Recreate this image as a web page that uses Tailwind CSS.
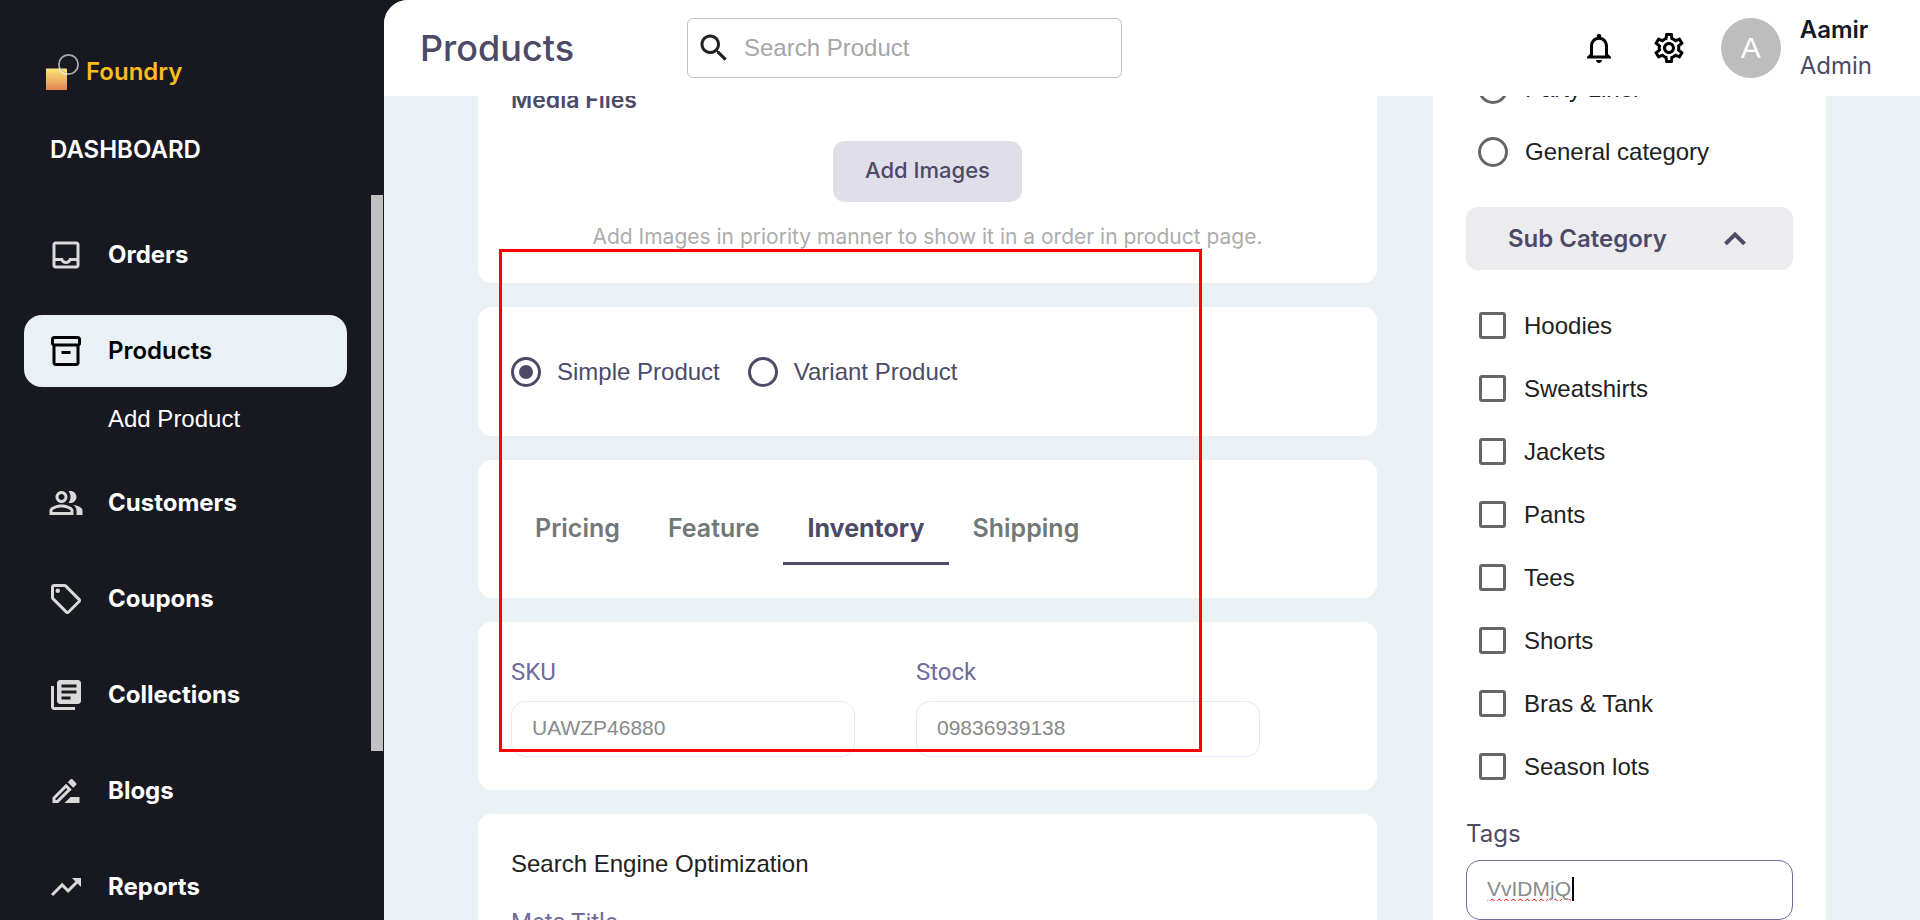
<!DOCTYPE html>
<html lang="en">
<head>
<meta charset="utf-8">
<meta name="viewport" content="width=device-width, initial-scale=1">
<title>Foundry – Products</title>
<script src="https://cdn.jsdelivr.net/npm/@tailwindcss/browser@4"></script>
</head>
<body class="bg-[#181821] font-['Liberation_Sans',Arial,sans-serif] text-2xl text-[#212121]">
<div class="relative flex h-screen overflow-hidden">

  <!-- Sidebar -->
  <aside class="relative w-1/5 shrink-0 text-white font-['Inter',sans-serif] font-semibold">
    <a href="#" class="ml-[46px] mt-[54px] flex h-9 items-center gap-[7px] text-[#fbbc1f]">
      <svg class="h-9 w-[33px]" viewBox="0 0 33 36" fill="none" aria-hidden="true">
        <defs><linearGradient id="logo" x1="0" y1="0" x2="0" y2="1"><stop offset="0" stop-color="#fbe77c"/><stop offset="1" stop-color="#e2854f"/></linearGradient></defs>
        <path d="M0 14.5h20a1 1 0 0 1 1 1V36H0z" fill="url(#logo)"/>
        <circle cx="22.500" cy="10.500" r="9.600" stroke="#a9a9ad" stroke-width="1.800"/>
        <path d="M12.900 14.500a10.500 10.500 0 0 0 8.100 5.700" stroke="#fff3c4" stroke-width="1.500"/>
      </svg>
      <span>Foundry</span>
    </a>
    <h2 class="ml-[50px] mt-[42px] leading-9">DASHBOARD</h2>
    <nav class="ml-6 mr-[37px] mt-[51px] font-bold" aria-label="Main">
      <ul class="flex flex-col gap-6">
        <li><a href="#" class="flex h-[72px] items-center gap-6 rounded-[18px] px-6">
          <svg class="size-9 text-[#d9d9da]" viewBox="0 0 24 24" fill="currentColor" aria-hidden="true"><path d="M19 3H5c-1.100 0-2 .9-2 2v14c0 1.100.9 2 2 2h14c1.100 0 2-.9 2-2V5c0-1.100-.9-2-2-2zm0 16H5v-3h3.560c.69 1.190 1.970 2 3.450 2s2.750-.81 3.450-2H19v3zm0-5h-4.990c0 1.100-.9 2-2 2s-2-.9-2-2H5V5h14v9z"/></svg>
          <span>Orders</span></a></li>
        <li>
          <a href="#" aria-current="page" class="flex h-[72px] items-center gap-6 rounded-[18px] bg-[#e9f1f5] px-6 font-semibold text-black">
            <svg class="size-9" viewBox="0 0 24 24" fill="currentColor" aria-hidden="true"><path d="M20 2H4c-1 0-2 .9-2 2v3.010c0 .72.43 1.340 1 1.690V20c0 1.100 1.100 2 2 2h14c.9 0 2-.9 2-2V8.700c.57-.35 1-.97 1-1.690V4c0-1.100-1-2-2-2zm-1 18H5V9h14v11zm1-13H4V4h16v3z"/><path d="M9 12h6v2H9z"/></svg>
            <span>Products</span></a>
          <a href="#" class="mt-2 flex h-12 items-center pl-[84px] font-['Liberation_Sans',Arial,sans-serif] font-normal">Add Product</a>
        </li>
        <li><a href="#" class="flex h-[72px] items-center gap-6 rounded-[18px] px-6">
          <svg class="size-9 text-[#d9d9da]" viewBox="0 0 24 24" fill="currentColor" aria-hidden="true"><path d="M16.670 13.130C18.040 14.060 19 15.320 19 17v3h4v-3c0-2.180-3.570-3.470-6.330-3.870zM15 12c2.210 0 4-1.790 4-4s-1.790-4-4-4c-.47 0-.91.1-1.330.24C14.500 5.270 15 6.580 15 8s-.5 2.730-1.330 3.760c.42.14.86.24 1.330.24zM9 12c2.210 0 4-1.790 4-4s-1.790-4-4-4-4 1.790-4 4 1.790 4 4 4zm0-6c1.100 0 2 .9 2 2s-.9 2-2 2-2-.9-2-2 .9-2 2-2zM9 13c-2.670 0-8 1.340-8 4v3h16v-3c0-2.660-5.330-4-8-4zm6 5H3v-.99C3.200 16.290 6.300 15 9 15s5.800 1.290 6 2v1z"/></svg>
          <span>Customers</span></a></li>
        <li><a href="#" class="flex h-[72px] items-center gap-6 rounded-[18px] px-6">
          <svg class="size-9 text-[#d9d9da]" viewBox="0 0 24 24" fill="currentColor" aria-hidden="true"><path d="M21.410 11.580l-9-9C12.050 2.220 11.550 2 11 2H4c-1.100 0-2 .9-2 2v7c0 .55.22 1.050.59 1.420l9 9c.36.36.86.58 1.410.58s1.050-.22 1.410-.59l7-7c.37-.36.59-.86.59-1.410s-.23-1.060-.59-1.420zM13 20.010L4 11V4h7v-.01l9 9-7 7.020z"/><circle cx="6.500" cy="6.500" r="1.500"/></svg>
          <span>Coupons</span></a></li>
        <li><a href="#" class="flex h-[72px] items-center gap-6 rounded-[18px] px-6">
          <svg class="size-9 text-[#d9d9da]" viewBox="0 0 24 24" fill="currentColor" aria-hidden="true"><path d="M4 6H2v14c0 1.100.9 2 2 2h14v-2H4V6zm16-4H8c-1.100 0-2 .9-2 2v12c0 1.100.9 2 2 2h12c1.100 0 2-.9 2-2V4c0-1.100-.9-2-2-2zm-1 9H9V9h10v2zm-4 4H9v-2h6v2zm4-8H9V5h10v2z"/></svg>
          <span>Collections</span></a></li>
        <li><a href="#" class="flex h-[72px] items-center gap-6 rounded-[18px] px-6">
          <svg class="size-9 text-[#d9d9da]" viewBox="0 0 24 24" fill="currentColor" aria-hidden="true"><path d="M15 16l-4 4h10v-4h-6zM12.060 7.190L3 16.250V20h3.750l9.060-9.060-3.750-3.750zM5.920 18H5v-.92l7.060-7.060.92.92L5.920 18zM18.710 8.040c.39-.39.39-1.020 0-1.410l-2.340-2.340c-.2-.2-.45-.29-.71-.29-.25 0-.51.1-.7.290l-1.830 1.830 3.750 3.750 1.830-1.830z"/></svg>
          <span>Blogs</span></a></li>
        <li><a href="#" class="flex h-[72px] items-center gap-6 rounded-[18px] px-6">
          <svg class="size-9 text-[#d9d9da]" viewBox="0 0 24 24" fill="currentColor" aria-hidden="true"><path d="M16 6l2.290 2.290-4.880 4.880-4-4L2 16.590 3.410 18l6-6 4 4 6.300-6.290L22 12V6z"/></svg>
          <span>Reports</span></a></li>
      </ul>
    </nav>
    <!-- Scrollbar thumb -->
    <div class="absolute right-px top-[195px] h-[556px] w-3 bg-[#c1c1c1]"></div>
  </aside>

  <div class="flex min-w-0 flex-1 flex-col overflow-hidden rounded-tl-[24px] bg-[#e9f1f5]">
    <!-- Top bar -->
    <header class="relative z-10 flex h-24 shrink-0 items-center bg-white pl-9 pr-12 font-['Inter',sans-serif]">
      <h1 class="w-[267px] text-4xl font-medium text-[#4d4a68]">Products</h1>
      <label class="flex h-[60px] w-[435px] items-center gap-3 rounded-md border border-[#c4c4c4] px-2 font-['Liberation_Sans',Arial,sans-serif]">
        <svg class="size-9 shrink-0" viewBox="0 0 24 24" fill="currentColor" aria-hidden="true"><path d="M15.500 14h-.79l-.28-.27C15.410 12.590 16 11.110 16 9.500 16 5.910 13.090 3 9.500 3S3 5.910 3 9.500 5.910 16 9.500 16c1.610 0 3.090-.59 4.230-1.570l.27.28v.79l5 4.990L20.490 19l-4.990-5zm-6 0C7.010 14 5 11.990 5 9.500S7.010 5 9.500 5 14 7.010 14 9.500 11.990 14 9.500 14z"/></svg>
        <input type="text" aria-label="Search Product" placeholder="Search Product" class="w-full min-w-0 outline-none placeholder:text-[#a6a6a6]">
      </label>
      <div class="ml-auto flex items-center text-black">
        <button type="button" aria-label="Notifications" class="mr-[34px]">
          <svg class="size-9" viewBox="0 0 24 24" fill="currentColor" aria-hidden="true"><path d="M12 22c1.100 0 2-.9 2-2h-4c0 1.100.9 2 2 2zm6-6v-5c0-3.070-1.630-5.640-4.500-6.320V4c0-.83-.67-1.500-1.500-1.500s-1.500.67-1.500 1.500v.68C7.640 5.360 6 7.920 6 11v5l-2 2v1h16v-1l-2-2zm-2 1H8v-6c0-2.480 1.510-4.500 4-4.500s4 2.020 4 4.500v6z"/></svg>
        </button>
        <button type="button" aria-label="Settings" class="mr-[34px]">
          <svg class="size-9" viewBox="0 0 24 24" fill="currentColor" aria-hidden="true"><path d="M19.430 12.980c.04-.32.07-.64.07-.98 0-.34-.03-.66-.07-.98l2.110-1.650c.19-.15.24-.42.12-.64l-2-3.460c-.09-.16-.26-.25-.44-.25-.06 0-.12.01-.17.030l-2.490 1c-.52-.4-1.080-.73-1.690-.98l-.38-2.650C14.460 2.180 14.250 2 14 2h-4c-.25 0-.46.18-.49.42l-.38 2.650c-.61.25-1.170.59-1.690.98l-2.490-1c-.06-.02-.12-.03-.18-.03-.17 0-.34.09-.43.25l-2 3.460c-.13.22-.07.49.12.64l2.110 1.650c-.04.32-.07.65-.07.98 0 .33.03.66.07.98l-2.110 1.650c-.19.15-.24.42-.12.64l2 3.460c.09.16.26.25.44.25.06 0 .12-.01.17-.03l2.490-1c.52.4 1.080.73 1.690.98l.38 2.650c.03.24.24.42.49.42h4c.25 0 .46-.18.49-.42l.38-2.650c.61-.25 1.170-.59 1.690-.98l2.490 1c.06.02.12.03.18.03.17 0 .34-.09.43-.25l2-3.460c.12-.22.07-.49-.12-.64l-2.110-1.650zm-1.980-1.710c.04.31.05.52.05.73 0 .21-.02.43-.05.73l-.14 1.130.89.7 1.080.84-.7 1.210-1.270-.51-1.040-.42-.9.680c-.43.32-.84.56-1.250.73l-1.060.43-.16 1.130-.2 1.350h-1.400l-.19-1.350-.16-1.130-1.060-.43c-.43-.18-.83-.41-1.230-.71l-.91-.7-1.060.43-1.270.51-.7-1.210 1.080-.84.89-.7-.14-1.130c-.03-.31-.05-.54-.05-.74s.02-.43.05-.73l.14-1.130-.89-.7-1.080-.84.7-1.210 1.270.51 1.040.42.9-.68c.43-.32.84-.56 1.250-.73l1.060-.43.16-1.130.2-1.350h1.390l.19 1.350.16 1.130 1.060.43c.43.18.83.41 1.230.71l.91.7 1.060-.43 1.270-.51.7 1.210-1.070.85-.89.7.14 1.130zM12 8c-2.210 0-4 1.790-4 4s1.790 4 4 4 4-1.790 4-4-1.790-4-4-4zm0 6c-1.100 0-2-.9-2-2s.9-2 2-2 2 .9 2 2-.9 2-2 2z"/></svg>
        </button>
        <div class="mr-[19px] flex size-[60px] items-center justify-center rounded-full bg-[#bdbdbd] text-[30px] text-white font-['Liberation_Sans',Arial,sans-serif]">A</div>
        <div class="leading-9"><p class="font-semibold text-[#111827]">Aamir</p><p class="text-[#4d4a68]">Admin</p></div>
      </div>
    </header>

    <main class="-mt-6 flex flex-1 items-start gap-14 px-[94px]">
      <div class="flex min-w-0 flex-1 flex-col gap-6">
        <section class="rounded-b-[14px] bg-white px-[33px] pb-7 pt-[10px] font-['Inter',sans-serif]">
          <h2 class="text-[23px] leading-9 font-semibold text-[#4d4a68]">Media Files</h2>
          <div class="mt-[23px] flex flex-col items-center">
            <button type="button" class="h-[61px] rounded-xl bg-[#e0dee8] px-8 pb-0.5 text-[22px] font-medium text-[#4d4a68]">Add Images</button>
            <p class="mt-[17px] text-[21px] leading-9 text-[#adadad]">Add Images in priority manner to show it in a order in product page.</p>
          </div>
        </section>

        <section class="flex h-[129px] items-center gap-7 rounded-[14px] bg-white px-[33px] text-[#4d4a68]">
          <label class="flex items-center gap-4"><input type="radio" name="kind" checked class="size-[30px] appearance-none rounded-full border-3 border-[#4d4a68] bg-white bg-clip-content p-[5px] checked:bg-[#4d4a68]">Simple Product</label>
          <label class="flex items-center gap-4"><input type="radio" name="kind" class="size-[30px] appearance-none rounded-full border-3 border-[#4d4a68] bg-white bg-clip-content p-[5px] checked:bg-[#4d4a68]">Variant Product</label>
        </section>

        <section class="rounded-[14px] bg-white px-[33px] py-[33px] font-['Inter',sans-serif]">
          <div role="tablist" class="flex h-[72px] text-[25px] font-semibold text-[#717877]">
            <button type="button" role="tab" aria-selected="false" class="px-6">Pricing</button>
            <button type="button" role="tab" aria-selected="false" class="px-6">Feature</button>
            <button type="button" role="tab" aria-selected="true" class="border-b-3 border-[#4d4a68] px-6 pt-[3px] font-bold text-[#4d4a68]">Inventory</button>
            <button type="button" role="tab" aria-selected="false" class="px-6">Shipping</button>
          </div>
        </section>

        <section class="grid grid-cols-2 rounded-[14px] bg-white pb-[33px] pl-[33px] pr-14 pt-8">
          <div class="flex flex-col gap-[11px] pr-[61px]">
            <label for="sku" class="font-['Roboto',sans-serif] leading-9 text-[#706b9c]">SKU</label>
            <input id="sku" type="text" value="UAWZP46880" class="h-14 rounded-[14px] border border-[#e8e6fb] px-5 pb-0.5 text-[21px] text-[#8a8a8a] outline-none">
          </div>
          <div class="flex flex-col gap-[11px] pr-[61px]">
            <label for="stock" class="font-['Roboto',sans-serif] leading-9 text-[#706b9c]">Stock</label>
            <input id="stock" type="text" value="09836939138" class="h-14 rounded-[14px] border border-[#e8e6fb] px-5 pb-0.5 text-[21px] text-[#8a8a8a] outline-none">
          </div>
        </section>

        <section class="rounded-t-[14px] bg-white px-[33px] pb-24 pt-8">
          <h2 class="leading-9">Search Engine Optimization</h2>
          <label for="meta" class="mt-[22px] block font-['Roboto',sans-serif] leading-9 text-[#706b9c]">Meta Title</label>
          <input id="meta" type="text" class="mt-3 h-14 w-full rounded-[14px] border border-[#e8e6fb] px-5 text-[21px]">
        </section>
      </div>

      <aside class="flex w-[393px] shrink-0 flex-col self-stretch bg-white px-[33px]">
        <div class="flex flex-col pl-3">
          <label class="-mt-[15px] flex h-[63px] items-center gap-[17px]"><input type="radio" name="cat" class="size-[30px] appearance-none rounded-full border-3 border-[#666]">Party Liner</label>
          <label class="flex h-[63px] items-center gap-[17px]"><input type="radio" name="cat" class="size-[30px] appearance-none rounded-full border-3 border-[#666]">General category</label>
        </div>
        <button type="button" aria-expanded="true" class="mt-6 flex h-[63px] shrink-0 items-center justify-between rounded-xl bg-[#ececee] pl-[42px] pr-10 font-['Inter',sans-serif] font-semibold text-[#4d4a68]">
          Sub Category
          <svg class="size-9" viewBox="0 0 24 24" fill="currentColor" aria-hidden="true"><path d="M12 7.200l-7.300 7.100 1.900 1.900L12 10.900l5.400 5.300 1.900-1.900z"/></svg>
        </button>
        <div class="mt-6 flex flex-col pl-[13px]">
          <label class="flex h-[63px] items-center gap-[18px]"><input type="checkbox" class="size-[27px] appearance-none rounded-[3px] border-3 border-[#666]">Hoodies</label>
          <label class="flex h-[63px] items-center gap-[18px]"><input type="checkbox" class="size-[27px] appearance-none rounded-[3px] border-3 border-[#666]">Sweatshirts</label>
          <label class="flex h-[63px] items-center gap-[18px]"><input type="checkbox" class="size-[27px] appearance-none rounded-[3px] border-3 border-[#666]">Jackets</label>
          <label class="flex h-[63px] items-center gap-[18px]"><input type="checkbox" class="size-[27px] appearance-none rounded-[3px] border-3 border-[#666]">Pants</label>
          <label class="flex h-[63px] items-center gap-[18px]"><input type="checkbox" class="size-[27px] appearance-none rounded-[3px] border-3 border-[#666]">Tees</label>
          <label class="flex h-[63px] items-center gap-[18px]"><input type="checkbox" class="size-[27px] appearance-none rounded-[3px] border-3 border-[#666]">Shorts</label>
          <label class="flex h-[63px] items-center gap-[18px]"><input type="checkbox" class="size-[27px] appearance-none rounded-[3px] border-3 border-[#666]">Bras &amp; Tank</label>
          <label class="flex h-[63px] items-center gap-[18px]"><input type="checkbox" class="size-[27px] appearance-none rounded-[3px] border-3 border-[#666]">Season lots</label>
        </div>
        <label for="tags" class="mt-[18px] font-['Inter',sans-serif] leading-9 text-[#4d4a68]">Tags</label>
        <div class="relative mt-2">
          <input id="tags" type="text" value="VvIDMjQ" spellcheck="false" class="block h-[60px] w-full rounded-[14px] border border-[#706b9c] px-5 pb-0.5 text-[21px] text-[#8a8a8a] underline decoration-[#ff0000] decoration-wavy decoration-1 underline-offset-2 outline-none">
          <span class="absolute left-[106px] top-[17px] h-6 w-0.5 bg-black"></span>
        </div>
      </aside>
    </main>
  </div>

  <!-- Highlight frame -->
  <div class="pointer-events-none absolute left-[499px] top-[249px] z-20 h-[503px] w-[703px] border-3 border-[#ff0000]"></div>
</div>
</body>
</html>
